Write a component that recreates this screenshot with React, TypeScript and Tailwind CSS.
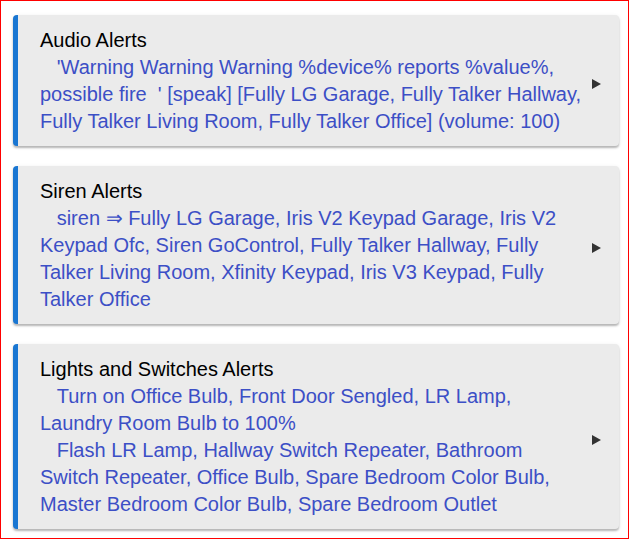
import React from 'react';

interface AlertCardProps {
  title: string;
  lines: string[];
}

const sp = '\u00a0\u00a0\u00a0';

function AlertCard({ title, lines }: AlertCardProps) {
  return (
    <div className="w-[606px] flex items-center bg-[#ebebeb] border-l-[5px] border-[#1976d2] rounded-[4px] shadow-[0_2px_2px_rgba(0,0,0,0.25),0_1px_4px_rgba(0,0,0,0.08)] pl-[22px] pr-[18px] pt-[12px] pb-[11px]">
      <div className="flex-1 text-[20px] leading-[27px]">
        <div className="text-black">{title}</div>
        {lines.map((l, i) => (
          <div key={i} className="text-[#3c4fc6]">
            {sp}
            {l}
          </div>
        ))}
      </div>
      {/* expand arrow */}
      <svg width="9" height="10" viewBox="0 0 9 10" className="ml-[7px] mt-[5px] shrink-0">
        <path d="M0 0 L9 5 L0 10 Z" fill="#333" />
      </svg>
    </div>
  );
}

export default function App() {
  return (
    <div
      className="w-[629px] h-[539px] border border-[#ff0000] bg-white pl-[12px] pt-[14px] flex flex-col gap-[20px]"
      style={{ fontFamily: '"Liberation Sans", Arial, sans-serif' }}
    >
      <AlertCard
        title="Audio Alerts"
        lines={[
          "'Warning Warning Warning %device% reports %value%, possible fire \u00a0' [speak] [Fully LG Garage, Fully Talker Hallway, Fully Talker Living Room, Fully Talker Office] (volume: 100)",
        ]}
      />
      <AlertCard
        title="Siren Alerts"
        lines={[
          'siren \u21d2 Fully LG Garage, Iris V2 Keypad Garage, Iris V2 Keypad Ofc, Siren GoControl, Fully Talker Hallway, Fully Talker Living Room, Xfinity Keypad, Iris V3 Keypad, Fully Talker Office',
        ]}
      />
      <AlertCard
        title="Lights and Switches Alerts"
        lines={[
          'Turn on Office Bulb, Front Door Sengled, LR Lamp, Laundry Room Bulb to 100%',
          'Flash LR Lamp, Hallway Switch Repeater, Bathroom Switch Repeater, Office Bulb, Spare Bedroom Color Bulb, Master Bedroom Color Bulb, Spare Bedroom Outlet',
        ]}
      />
    </div>
  );
}
